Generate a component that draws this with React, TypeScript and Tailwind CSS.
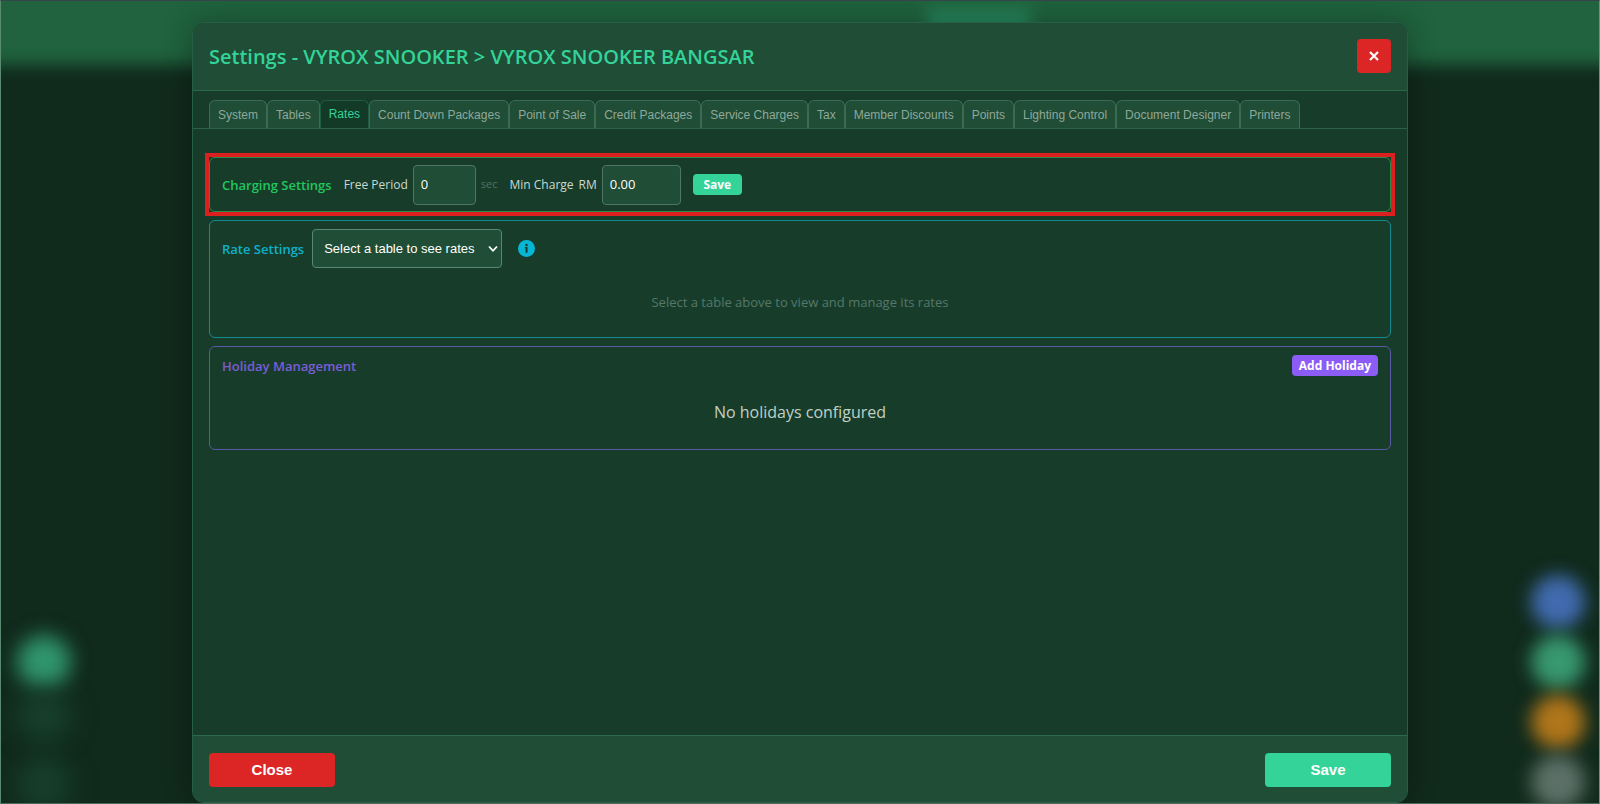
import { useState } from 'react'

const TABS = [
    'System',
    'Tables',
    'Rates',
    'Count Down Packages',
    'Point of Sale',
    'Credit Packages',
    'Service Charges',
    'Tax',
    'Member Discounts',
    'Points',
    'Lighting Control',
    'Document Designer',
    'Printers',
]

/**
 * Blurred page that sits behind the dialog
 * @returns ReactComponent
 */
const Backdrop = () => {
    return (
        <div className="absolute inset-0 overflow-hidden" aria-hidden="true">
            <div className="absolute -inset-x-10 -top-10 h-[104px] bg-[#20633e] blur-[8px]"></div>
            <div className="absolute left-[926px] top-2 h-10 w-[104px] bg-[#25855b] blur-[8px]"></div>
            <div className="absolute left-4 bottom-[114px] size-[54px] rounded-full bg-[#30966c] blur-[10px]"></div>
            <div className="absolute left-4 bottom-[60px] size-[54px] rounded-full bg-[#173f2b] blur-[12px]"></div>
            <div className="absolute left-4 -bottom-2 size-[54px] rounded-full bg-[#173f2b] blur-[12px]"></div>
            <div className="absolute right-[14px] -bottom-[6px] flex flex-col gap-[6px]">
                <div className="size-[54px] rounded-full bg-[#416baf] blur-[9px]"></div>
                <div className="size-[54px] rounded-full bg-[#38986f] blur-[9px]"></div>
                <div className="size-[54px] rounded-full bg-[#b0761a] blur-[9px]"></div>
                <div className="size-[54px] rounded-full bg-[#5c7067] blur-[9px]"></div>
            </div>
        </div>
    )
}

/**
 * Tab strip under the dialog header
 * @param props { active: string, onSelect: (tab: string) => void }
 * @returns ReactComponent
 */
const TabBar = (props: { active: string, onSelect: (tab: string) => void }) => {
    return (
        <div role="tablist" className="flex items-end border-b border-[#2b6147] px-4 pt-[9px] font-['Liberation_Sans',sans-serif] text-xs">
            {TABS.map((tab) =>
                <button
                    key={tab}
                    type="button"
                    role="tab"
                    aria-selected={tab === props.active}
                    onClick={() => props.onSelect(tab)}
                    className={
                        tab === props.active
                            ? 'h-7 whitespace-nowrap rounded-t-md border border-b-0 border-[#1f5c41] bg-[#123a26] px-2 pb-[2px] text-[#34d399]'
                            : 'h-7 whitespace-nowrap rounded-t-md border border-b-0 border-[#3b6b53] bg-[#1f4d35] px-2 text-[#8fa89b]'
                    }
                >
                    {tab}
                </button>
            )}
        </div>
    )
}

/**
 * Free period and minimum charge
 * @returns ReactComponent
 */
const ChargingSettings = () => {
    return (
        <div className="outline-4 outline-[#dc1f1f]">
            <section className="flex h-[55px] items-center gap-3 rounded-md border border-[#2f8a45] px-3">
                <h2 className="font-semibold text-[#22c55e]">Charging Settings</h2>
                <div className="flex items-center gap-[5px] text-xs text-[#cbd8d0]">
                    <label htmlFor="free-period">Free Period</label>
                    <input id="free-period" type="text" defaultValue="0" className="h-10 w-[63px] rounded border border-[#4d7761] bg-[#1f4d35] px-[7px] pb-[2px] text-[13px] text-white" />
                    <span className="text-[11px] text-[#527362]">sec</span>
                </div>
                <div className="flex items-center gap-[5px] text-xs text-[#cbd8d0]">
                    <label htmlFor="min-charge">Min Charge</label>
                    <span>RM</span>
                    <input id="min-charge" type="text" defaultValue="0.00" className="h-10 w-[79px] rounded border border-[#4d7761] bg-[#1f4d35] px-[7px] pb-[2px] text-[13px] text-white" />
                </div>
                <button type="button" className="h-[21px] w-[49px] rounded bg-[#34d399] text-xs font-bold text-white">Save</button>
            </section>
        </div>
    )
}

/**
 * Table picker for the rates
 * @returns ReactComponent
 */
const RateSettings = () => {
    return (
        <section className="rounded-md border border-[#148a92] px-3 pt-2 pb-[25px]">
            <div className="flex items-center">
                <h2 className="font-semibold text-[#0fb0cb]">
                    <label htmlFor="rate-table">Rate Settings</label>
                </h2>
                <div className="relative ml-2">
                    <select id="rate-table" className="h-[39px] w-[190px] appearance-none rounded border border-[#5b8670] bg-[#1f4d35] pl-[11px] font-['Liberation_Sans',sans-serif] text-[13px] text-white">
                        <option>Select a table to see rates</option>
                    </select>
                    <svg className="pointer-events-none absolute right-1 top-4 h-2 w-[10px]" viewBox="0 0 10 8" fill="none" stroke="white" strokeWidth="1.8" aria-hidden="true">
                        <path d="M1 1.5 5 5.8 9 1.5" />
                    </svg>
                </div>
                <button type="button" aria-label="About rates" className="ml-4">
                    <svg className="size-[17px]" viewBox="0 0 18 18" aria-hidden="true">
                        <circle cx="9" cy="9" r="9" fill="#06b6d4" />
                        <circle cx="9" cy="5.2" r="1.3" fill="#123c29" />
                        <path d="M7.2 7.4h2.9v6.2H8V8.7h-.8z" fill="#123c29" />
                    </svg>
                </button>
            </div>
            <p className="mt-6 text-center text-[#55786a]">Select a table above to view and manage its rates</p>
        </section>
    )
}

/**
 * Holiday list
 * @returns ReactComponent
 */
const HolidayManagement = () => {
    return (
        <section className="rounded-md border border-[#5a57a5] px-3 pt-2 pb-[25px]">
            <div className="flex items-center justify-between">
                <h2 className="font-semibold text-[#7c5cd6]">Holiday Management</h2>
                <button type="button" className="h-[21px] rounded bg-[#8b5cf6] px-[7px] text-xs font-bold text-white">Add Holiday</button>
            </div>
            <p className="mt-6 text-center text-base text-[#c0d0c6]">No holidays configured</p>
        </section>
    )
}

export default function App() {
    const [tab, setTab] = useState('Rates')

    return (
        <div className="relative flex h-screen overflow-hidden border border-t-[#36454b] border-r-[#6f8f7f] border-b-[#51665b] border-l-[#5a8a70] bg-[#102a1c] px-[191px] pt-[21px] font-['Open_Sans',sans-serif] text-[13px] leading-5">
            <Backdrop />
            <main className="relative flex flex-1 flex-col overflow-hidden rounded-xl border border-[#265f46] bg-[#173d2a] shadow-[0_0_30px_rgba(0,0,0,0.3)]">
                <header className="flex items-start justify-between border-b border-[#2a6a4b] bg-[#1f4d35] px-4 pt-4 pb-[17px]">
                    <h1 className="pt-[2px] text-xl leading-8 font-semibold text-[#34d399]">Settings - VYROX SNOOKER &gt; VYROX SNOOKER BANGSAR</h1>
                    <button type="button" aria-label="Close settings" className="flex size-[34px] items-center justify-center rounded bg-[#dc2626]">
                        <svg className="size-[10px]" viewBox="0 0 10 10" stroke="white" strokeWidth="2.2" aria-hidden="true">
                            <path d="M1 1l8 8M9 1 1 9" />
                        </svg>
                    </button>
                </header>
                <TabBar active={tab} onSelect={setTab} />
                <div className="flex flex-1 flex-col gap-2 px-4 pt-7">
                    <ChargingSettings />
                    <RateSettings />
                    <HolidayManagement />
                </div>
                <footer className="flex justify-between border-t border-[#2a6a4b] bg-[#1f4d35] px-4 pt-[17px] pb-[15px] font-['Liberation_Sans',sans-serif] text-[15px] font-bold text-white">
                    <button type="button" className="h-[34px] w-[126px] rounded bg-[#dc2626]">Close</button>
                    <button type="button" className="h-[34px] w-[126px] rounded bg-[#34d399]">Save</button>
                </footer>
            </main>
        </div>
    )
}
